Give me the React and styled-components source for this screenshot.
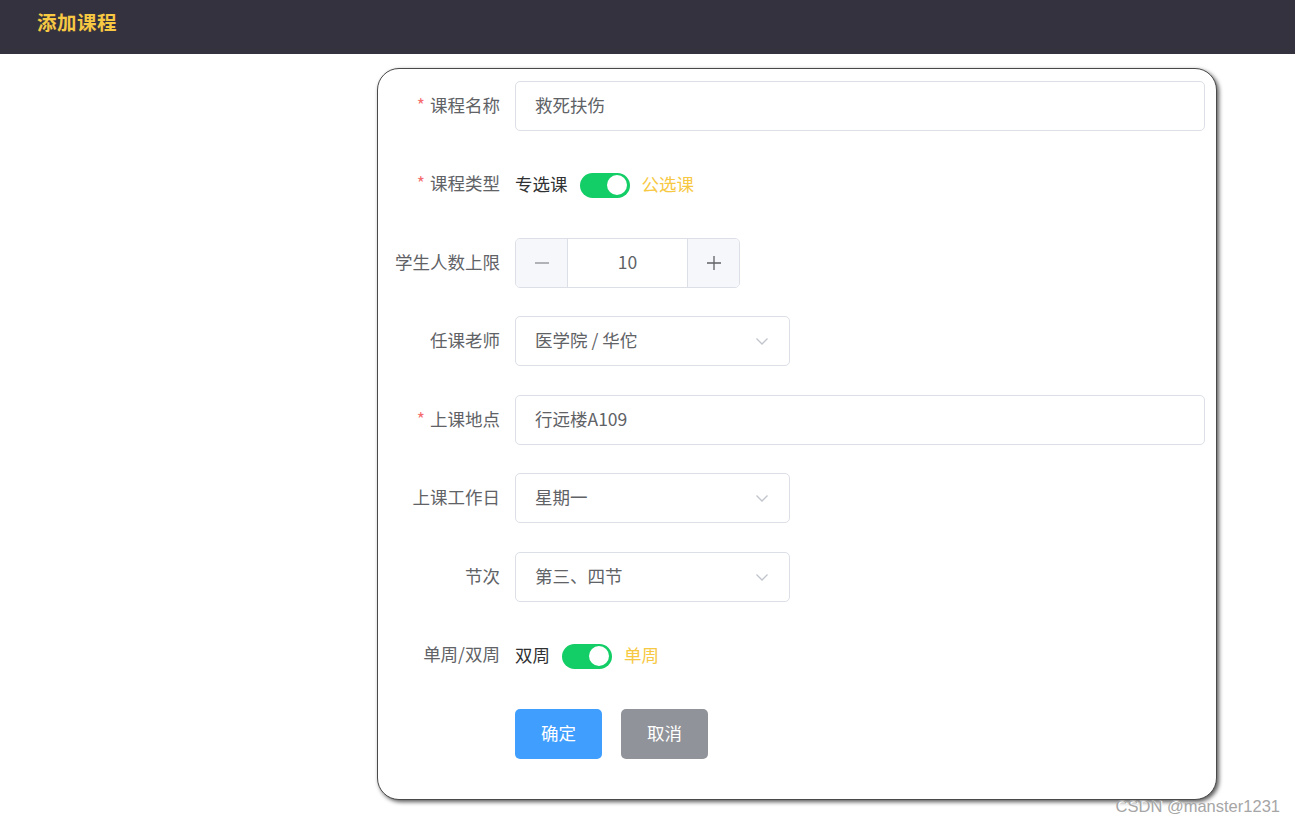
import React, { useState } from "react";
import styled, { createGlobalStyle } from "styled-components";

const GlobalStyle = createGlobalStyle`
  html, body {
    margin: 0;
    padding: 0;
    background: #ffffff;
    font-family: "Noto Sans CJK SC", "Liberation Sans", sans-serif;
  }
`;

const Page = styled.div`
  width: 1295px;
  height: 823px;
  position: relative;
  overflow: hidden;
  background: #ffffff;
`;

const Header = styled.header`
  height: 54px;
  background: #34323f;
  display: flex;
  align-items: center;
  padding: 0 0 12px 37px;
  box-sizing: border-box;
`;

const HeaderTitle = styled.h1`
  margin: 0;
  font-size: 19.5px;
  font-weight: 700;
  color: #f7c842;
  letter-spacing: 0.5px;
`;

const Main = styled.main`
  padding: 14px 0 0 377px;
`;

const Card = styled.div`
  width: 840px;
  box-sizing: border-box;
  border: 1px solid #4a4a4a;
  border-radius: 22px;
  box-shadow: 2px 2px 4px rgba(0, 0, 0, 0.65);
  padding: 12px 11px 40px 17px;
  background: #fff;
`;

const Form = styled.div`
  display: flex;
  flex-direction: column;
  gap: 28.45px;
`;

const Row = styled.div`
  display: flex;
  align-items: center;
  min-height: 50px;
`;

const Label = styled.label`
  width: 120px;
  flex-shrink: 0;
  box-sizing: border-box;
  padding: 0 15px 3px 0;
  text-align: right;
  font-size: 17.5px;
  color: #606266;
  white-space: nowrap;
`;

const Star = styled.span`
  color: #f56c6c;
  margin-right: 5px;
`;

const Field = styled.div`
  display: flex;
  align-items: center;
  flex: 1;
`;

const TextInput = styled.div`
  height: 50px;
  width: ${({ width }) => width || "100%"};
  box-sizing: border-box;
  border: 1px solid #dcdfe6;
  border-radius: 5px;
  padding: 0 19px 3px;
  display: flex;
  align-items: center;
  justify-content: space-between;
  font-size: 17.5px;
  color: #606266;
`;

const Chevron = () => (
  <svg width="16" height="16" viewBox="0 0 16 16" fill="none" style={{ marginTop: 3 }}>
    <path d="M2.5 5.5 L8 11 L13.5 5.5" stroke="#c0c4cc" strokeWidth="1.3" />
  </svg>
);

const SwitchText = styled.span`
  font-size: 17.5px;
  padding-bottom: 1px;
  color: ${({ active }) => (active ? "#f7c842" : "#303133")};
`;

const SwitchTrack = styled.button`
  width: 50px;
  height: 25px;
  border: none;
  border-radius: 13px;
  background: #13ce66;
  margin: 2px 12px 0;
  padding: 0;
  position: relative;
  cursor: pointer;
  &::after {
    content: "";
    position: absolute;
    top: 2.5px;
    left: ${({ on }) => (on ? "27px" : "3px")};
    width: 20px;
    height: 20px;
    border-radius: 50%;
    background: #fff;
  }
`;

const NumberBox = styled.div`
  width: 225px;
  height: 50px;
  box-sizing: border-box;
  border: 1px solid #dcdfe6;
  border-radius: 5px;
  display: flex;
  overflow: hidden;
`;

const NumberBtn = styled.div`
  width: 51px;
  background: #f5f7fa;
  display: flex;
  align-items: center;
  justify-content: center;
  color: #606266;
  ${({ side }) =>
    side === "left"
      ? "border-right: 1px solid #dcdfe6;"
      : "border-left: 1px solid #dcdfe6;"}
`;

const NumberValue = styled.div`
  flex: 1;
  display: flex;
  align-items: center;
  justify-content: center;
  padding-bottom: 3px;
  font-size: 17.5px;
  color: #606266;
`;

const Button = styled.button`
  height: 50px;
  padding: 0 26px 3px;
  border: none;
  border-radius: 5px;
  font-size: 17.5px;
  font-family: inherit;
  color: #fff;
  background: ${({ kind }) => (kind === "primary" ? "#409eff" : "#909399")};
  margin-right: 19px;
  cursor: pointer;
`;

const Watermark = styled.div`
  position: absolute;
  right: 15px;
  bottom: 7px;
  font-family: "Liberation Sans", Arial, sans-serif;
  font-size: 16.5px;
  color: #a6a6a6;
  text-shadow: 1px 1px 0 #fff;
`;

const Switch = ({ off, on, initial }) => {
  const [value, setValue] = useState(initial);
  return (
    <Field>
      <SwitchText active={!value}>{off}</SwitchText>
      <SwitchTrack on={value ? 1 : 0} onClick={() => setValue(!value)} />
      <SwitchText active={value}>{on}</SwitchText>
    </Field>
  );
};

export default function App() {
  const [count, setCount] = useState(10);

  return (
    <Page>
      <GlobalStyle />
      <Header>
        <HeaderTitle>添加课程</HeaderTitle>
      </Header>
      <Main>
        <Card>
          <Form>
            <Row>
              <Label>
                <Star>*</Star>课程名称
              </Label>
              <Field>
                <TextInput>救死扶伤</TextInput>
              </Field>
            </Row>
            <Row>
              <Label>
                <Star>*</Star>课程类型
              </Label>
              <Switch off="专选课" on="公选课" initial={true} />
            </Row>
            <Row>
              <Label>学生人数上限</Label>
              <Field>
                <NumberBox>
                  <NumberBtn side="left" onClick={() => setCount(count - 1)}>
                    <svg width="18" height="18" viewBox="0 0 18 18">
                      <path d="M2 9 H16" stroke="#8a8d93" strokeWidth="1.3" />
                    </svg>
                  </NumberBtn>
                  <NumberValue>{count}</NumberValue>
                  <NumberBtn side="right" onClick={() => setCount(count + 1)}>
                    <svg width="18" height="18" viewBox="0 0 18 18">
                      <path d="M2 9 H16 M9 2 V16" stroke="#606266" strokeWidth="1.3" />
                    </svg>
                  </NumberBtn>
                </NumberBox>
              </Field>
            </Row>
            <Row>
              <Label>任课老师</Label>
              <Field>
                <TextInput width="275px">
                  医学院 / 华佗
                  <Chevron />
                </TextInput>
              </Field>
            </Row>
            <Row>
              <Label>
                <Star>*</Star>上课地点
              </Label>
              <Field>
                <TextInput>行远楼A109</TextInput>
              </Field>
            </Row>
            <Row>
              <Label>上课工作日</Label>
              <Field>
                <TextInput width="275px">
                  星期一
                  <Chevron />
                </TextInput>
              </Field>
            </Row>
            <Row>
              <Label>节次</Label>
              <Field>
                <TextInput width="275px">
                  第三、四节
                  <Chevron />
                </TextInput>
              </Field>
            </Row>
            <Row>
              <Label>单周/双周</Label>
              <Switch off="双周" on="单周" initial={true} />
            </Row>
            <Row>
              <Label />
              <Field>
                <Button kind="primary">确定</Button>
                <Button kind="info">取消</Button>
              </Field>
            </Row>
          </Form>
        </Card>
      </Main>
      <Watermark>CSDN @manster1231</Watermark>
    </Page>
  );
}
